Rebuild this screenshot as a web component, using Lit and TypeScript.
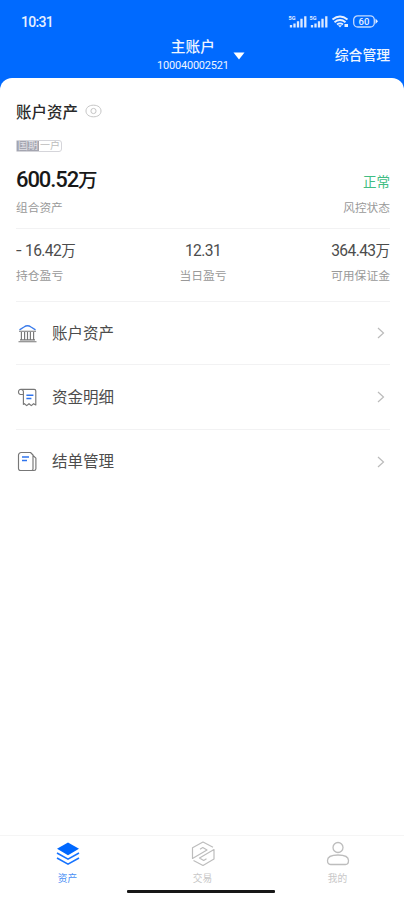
import { LitElement, html, svg, css } from "lit";
import { customElement } from "lit/decorators.js";

const bank = svg`<path d="M2.500 6.800 7 4Q10.500 1.400 14 4L18.500 6.800" stroke="#3b7bea" stroke-width="1.400"/><path d="M2 8.200h17M4.400 9v7.500M7.600 9v7.500M10.500 9v7.500M13.400 9v7.500M16.600 9v7.500M3 16.800h15M1.500 18.700h18"/>`;
const receipt = svg`<path d="M6 7.500H3.200A2.400 2.400 0 0 1 1.500 5.200 2.600 2.600 0 0 1 4 2.300h13.200a1.600 1.600 0 0 1 1.600 1.600V18l-2.200-1.300-2.300 1.900-2.300-1.900-2.300 1.900-2.300-1.900-1 .7V5.200A2.400 2.400 0 0 0 4.200 2.400"/><path d="M9.400 8.200h7M9.400 11.500h5" stroke="#2f74ed" stroke-width="1.500"/>`;
const papers = svg`<path d="M4.300 1.500h9.200L16 4v13.900a1.600 1.600 0 0 1-1.600 1.600H3.500A1.900 1.900 0 0 1 1.500 17.600V4.300A2.700 2.700 0 0 1 4.300 1.500ZM16 4.500l2.900 2.700v10.600a1.800 1.800 0 0 1-1.800 1.700h-3"/><path d="M5 6h7M5 9.500h5" stroke="#2f74ed" stroke-width="1.500"/>`;

const signal = (x: number) => svg`<g transform="translate(${x} 0)">
  <text x="0" y="4.500" font-size="5.500" font-weight="700" fill="#e7f0ff">5G</text>
  <path d="M2.500 12.500V10M6 12.500V8.500M9.500 12.500V6.200M13 12.500V3.700M16.800 12.500V1.200" stroke="#dce9ff" stroke-width="2.300"/></g>`;

@customElement("app-root")
export class AppRoot extends LitElement {
  static styles = css`
    :host {
      display: flex; flex-direction: column; height: 900px; width: 404px; overflow: hidden;
      background: #006aff; color: #333;
      font-family: Roboto, "Noto Sans CJK SC", sans-serif;
    }
    * { box-sizing: border-box; }
    svg { display: block; fill: none; flex: none; }
    .status { height: 36px; padding: 7px 25px 0 21px; display: flex; align-items: center; justify-content: space-between; color: #e7f0ff; }
    .time { font-size: 14px; font-weight: 500; letter-spacing: -.7px; }
    .head { height: 42px; display: grid; grid-template-columns: 157px auto 1fr; padding-right: 14px; color: #eef5ff; }
    .account { grid-column: 2; display: flex; align-items: flex-start; gap: 4px; padding-top: 1px; }
    .names { display: flex; flex-direction: column; align-items: center; white-space: nowrap; }
    .name { font-size: 14.700px; line-height: 20px; font-weight: 500; }
    .number { font-size: 11px; line-height: 17px; letter-spacing: -.2px; }
    .caret { margin-top: 15px; }
    .manage { grid-column: 3; justify-self: end; font-size: 13.800px; line-height: 38px; font-weight: 500; white-space: nowrap; }
    .panel { flex: 1; background: #fff; border-radius: 12px 12px 0 0; display: flex; flex-direction: column; }
    .content { padding: 0 14px 0 16px; flex: 1; }
    .title { display: flex; align-items: center; gap: 7px; height: 24px; margin-top: 21px; font-size: 15.500px; font-weight: 500; color: #292929; }
    .title svg { margin-top: -1px; }
    .badge { display: flex; margin-top: 17px; width: 46px; height: 12px; border: 1px solid #d5d5da; border-radius: 1px 3px 3px 1px; font-size: 10px; line-height: 10px; color: #bbb; overflow: hidden; }
    .badge span { flex: 1; text-align: center; white-space: nowrap; }
    .badge .filled { background: #a4a5b0; color: #e2e2e7; }
    .row { display: flex; justify-content: space-between; align-items: center; }
    .total { height: 30px; margin-top: 12px; }
    .big { margin-top: -1px; font-size: 22px; font-weight: 500; color: #181818; letter-spacing: -1.100px; white-space: nowrap; }
    .big b { font-size: 19.500px; font-weight: 500; letter-spacing: 0; }
    .ok { font-size: 13.500px; color: #41bd83; margin-top: 3px; }
    .sub { height: 22px; margin-top: 1px; font-size: 11.700px; color: #999; }
    .metrics { display: grid; grid-template-columns: 1fr 1fr 1fr; height: 73px; margin-top: 11px; border-top: 1px solid #f2f2f3; padding-top: 10px; }
    .metric { display: flex; flex-direction: column; align-items: flex-start; }
    .metric:nth-child(2) { align-items: center; }
    .metric:nth-child(3) { align-items: flex-end; }
    .value { font-size: 15.600px; line-height: 24px; letter-spacing: -.6px; color: #4c4c4c; white-space: nowrap; }
    .value b { font-size: 14.500px; font-weight: 400; letter-spacing: 0; }
    .minus { display: inline-block; width: 9px; transform: scaleX(1.300); transform-origin: left; }
    .label { font-size: 11.800px; line-height: 17px; margin-top: 4px; color: #999; }
    .item { display: flex; align-items: center; height: 64px; padding: 0 5px 0 1px; border-top: 1px solid #f2f2f3; font-size: 15.500px; color: #4c4c4c; }
    .item:first-child { height: 63px; }
    .item:nth-child(2) { height: 65px; }
    .item .text { flex: 1; margin: -2px 0 0 14px; }
    .item:nth-child(3) .text { margin-top: -4px; }
    .tabs { height: 65px; border-top: 1px solid #f5f5f5; display: grid; grid-template-columns: repeat(3, 135px); position: relative; }
    .tab { display: flex; flex-direction: column; align-items: center; padding-top: 5px; font-size: 9.700px; line-height: 14px; color: #c8c8c8; }
    .tab svg { margin-bottom: 5px; }
    .tab.active { color: #4a90f5; }
    .home { position: absolute; left: 127px; bottom: 7px; width: 148px; height: 3px; background: #171717; border-radius: 1px; }
  `;

  item(icon: unknown, text: string) {
    return html`<div class="item">
      <svg width="21" height="21" viewBox="0 0 21 21" stroke="#777" stroke-width="1.150" stroke-linejoin="round">${icon}</svg>
      <span class="text">${text}</span>
      <svg width="8" height="12" viewBox="0 0 8 12" stroke="#bbb" stroke-width="1.200"><path d="M1 1l5.500 5L1 11"/></svg>
    </div>`;
  }

  metric(value: string, unit: string, label: string) {
    const negative = value.startsWith("-");
    return html`<div class="metric"><div class="value">${negative ? html`<span class="minus">-</span>` : ""}${negative ? value.slice(1) : value}<b>${unit}</b></div><div class="label">${label}</div></div>`;
  }

  render() {
    return html`
      <div class="status">
        <span class="time">10:31</span>
        <svg width="91" height="13" viewBox="0 0 91 13">
          ${signal(0.500)}${signal(21.500)}
          <path d="M44.500 4.500Q52 -1.500 59.500 4.500M46.500 7.200Q52 3 57.500 7.200M49 9.500Q52 7.300 55 9.500" stroke="#e7f0ff" stroke-width="1.900"/>
          <path d="M50 10.300h4L52 12.500ZM56.500 9h3.500v3h-3.500Z" fill="#e7f0ff"/>
          <rect x="65.700" y=".8" width="20.600" height="11.200" rx="4" stroke="#c4dbff" stroke-width="1.300"/>
          <path d="M87.500 3.500 90 6.200 87.500 9Z" fill="#e7f0ff"/>
          <text x="76" y="9.800" text-anchor="middle" font-size="9.500" font-weight="500" fill="#e7f0ff">60</text>
        </svg>
      </div>
      <div class="head">
        <div class="account">
          <div class="names"><span class="name">主账户</span><span class="number">100040002521</span></div>
          <svg class="caret" width="12" height="8" viewBox="0 0 12 8"><path d="M.5.5h11L6 7.500Z" fill="#fff"/></svg>
        </div>
        <span class="manage">综合管理</span>
      </div>
      <div class="panel">
        <div class="content">
          <div class="title">账户资产
            <svg width="17" height="14" viewBox="0 0 17 14" stroke="#c5c5c5"><path d="M1 7C1 3.500 4 1.200 8.500 1.200S16 3.500 16 7 13 12.800 8.500 12.800 1 10.500 1 7Z"/><circle cx="8.500" cy="7" r="2.600"/></svg>
          </div>
          <div class="badge"><span class="filled">国期</span><span>一户</span></div>
          <div class="row total"><span class="big">600.52<b>万</b></span><span class="ok">正常</span></div>
          <div class="row sub"><span>组合资产</span><span>风控状态</span></div>
          <div class="metrics">
            ${this.metric("-16.42", "万", "持仓盈亏")}
            ${this.metric("12.31", "", "当日盈亏")}
            ${this.metric("364.43", "万", "可用保证金")}
          </div>
          <div class="list">
            ${this.item(bank, "账户资产")}
            ${this.item(receipt, "资金明细")}
            ${this.item(papers, "结单管理")}
          </div>
        </div>
        <div class="tabs">
          <div class="tab active">
            <svg width="26" height="26" viewBox="0 0 26 26" stroke="#1673ff" stroke-width="1.600"><path d="M13 1.500 24 7.800 13 14.200 2 7.800Z" fill="#0068ff" stroke="none"/><path d="M2 12l11 6.200L24 12M2 17l11 6.200L24 17"/></svg>资产
          </div>
          <div class="tab">
            <svg width="26" height="26" viewBox="0 0 26 26" stroke="#bdbdbd" stroke-width="1.200" stroke-linejoin="round"><path d="M23 6.200 13 1 2.500 6.800V17.500L17 9l-4.200-2.400-2.800 1.600M3.500 19.500 13 24.500 24 18V8.500L9.500 17l4.200 2.400 2.800-1.600"/></svg>交易
          </div>
          <div class="tab">
            <svg width="26" height="26" viewBox="0 0 26 26" stroke="#bdbdbd" stroke-width="1.300"><circle cx="13" cy="6.500" r="5"/><path d="M2.500 19.500c0-4 4-5.500 10.500-5.500s10.500 1.500 10.500 5.500c0 2.500-1 4-3 4h-15c-2 0-3-1.500-3-4Z"/></svg>我的
          </div>
          <div class="home"></div>
        </div>
      </div>`;
  }
}
